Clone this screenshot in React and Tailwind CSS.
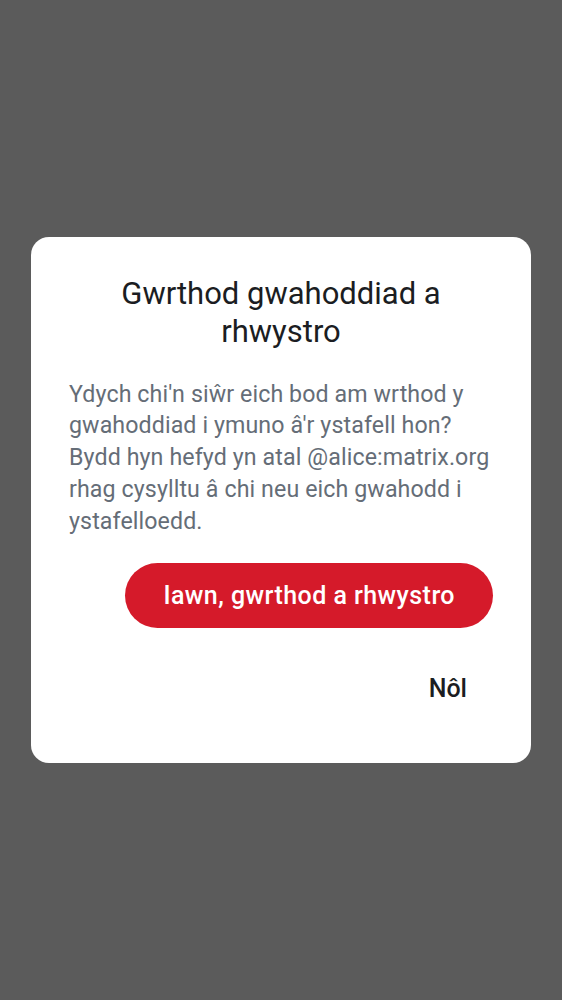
export default function App() {
  return (
    <div
      className="min-h-[1000px] w-full bg-[#5b5b5b] flex items-center justify-center"
      style={{ fontFamily: "Roboto, sans-serif" }}
    >
      <div className="w-[500px] bg-white rounded-[18px] px-[38px] pt-[38px] pb-[42px] flex flex-col">
        <h1 className="text-[31px] leading-[38px] text-[#1b1d22] text-center font-normal">
          Gwrthod gwahoddiad a rhwystro
        </h1>
        <p className="mt-[28px] text-[23.2px] leading-[31.7px] tracking-[0.1px] text-[#656d77]">
          Ydych chi'n siŵr eich bod am wrthod y gwahoddiad i ymuno â'r ystafell hon? Bydd hyn hefyd yn atal @alice:matrix.org rhag cysylltu â chi neu eich gwahodd i ystafelloedd.
        </p>
        <div className="mt-[26px] flex flex-col items-end">
          <button className="h-[65px] px-[38px] rounded-full bg-[#d51a2a] text-white text-[25px] font-medium tracking-[0.45px]">
            Iawn, gwrthod a rhwystro
          </button>
          <button className="mt-[28px] h-[65px] px-[26px] text-[25px] font-medium text-[#1b1d22]">
            Nôl
          </button>
        </div>
      </div>
    </div>
  );
}
